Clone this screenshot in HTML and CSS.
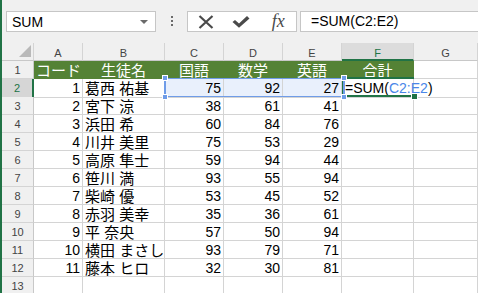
FILE: index.html
```html
<!DOCTYPE html>
<html lang="ja">
<head>
    <meta charset="UTF-8">
    <title>成績表 - SUM</title>
    <link rel="stylesheet" href="styles.css">
</head>
<body>

    <div class="app">
        <!-- Formula bar -->
        <div class="formula-bar">
            <div class="name-box">
                <span>SUM</span>
                <span class="caret"></span>
            </div>
            <div class="grip"><i></i><i></i><i></i></div>
            <div class="fx-buttons">
                <span class="btn">
                    <svg width="16" height="14" viewBox="0 0 16 14"><path d="M1.5 1 L14.5 13 M14.5 1 L1.5 13" stroke="#4a4a4a" stroke-width="2.2" fill="none"/></svg>
                </span>
                <span class="btn">
                    <svg width="18" height="12" viewBox="0 0 18 12"><path d="M0.5 6 L3 4 L7 7.5 L15 0 L17.5 2.5 L7 11.8 Z" fill="#4a4a4a"/></svg>
                </span>
                <span class="btn fx">fx</span>
            </div>
            <div class="formula-input">=SUM(C2:E2)</div>
        </div>

        <!-- Sheet -->
        <div class="sheet">
            <div class="row col-heads">
                <div class="corner"><span class="tri"></span></div>
                <div>A</div><div>B</div><div>C</div><div>D</div><div>E</div><div class="active">F</div><div>G</div>
            </div>
            <div class="row title-row">
                <div class="rh">1</div>
                <div>コード</div><div>生徒名</div><div>国語</div><div>数学</div><div>英語</div><div>合計</div><div class="plain"></div>
            </div>
            <div class="row">
                <div class="rh active">2</div>
                <div class="num">1</div><div class="name">葛西 祐基</div>
                <div class="num sel">75</div><div class="num sel">92</div><div class="num sel">27</div>
                <div class="editing">=SUM(<span class="ref">C2:E2</span>)</div><div></div>
            </div>
            <div class="row">
                <div class="rh">3</div>
                <div class="num">2</div><div class="name">宮下 涼</div>
                <div class="num">38</div><div class="num">61</div><div class="num">41</div><div></div><div></div>
            </div>
            <div class="row">
                <div class="rh">4</div>
                <div class="num">3</div><div class="name">浜田 希</div>
                <div class="num">60</div><div class="num">84</div><div class="num">76</div><div></div><div></div>
            </div>
            <div class="row">
                <div class="rh">5</div>
                <div class="num">4</div><div class="name">川井 美里</div>
                <div class="num">75</div><div class="num">53</div><div class="num">29</div><div></div><div></div>
            </div>
            <div class="row">
                <div class="rh">6</div>
                <div class="num">5</div><div class="name">高原 隼士</div>
                <div class="num">59</div><div class="num">94</div><div class="num">44</div><div></div><div></div>
            </div>
            <div class="row">
                <div class="rh">7</div>
                <div class="num">6</div><div class="name">笹川 満</div>
                <div class="num">93</div><div class="num">55</div><div class="num">94</div><div></div><div></div>
            </div>
            <div class="row">
                <div class="rh">8</div>
                <div class="num">7</div><div class="name">柴崎 優</div>
                <div class="num">53</div><div class="num">45</div><div class="num">52</div><div></div><div></div>
            </div>
            <div class="row">
                <div class="rh">9</div>
                <div class="num">8</div><div class="name">赤羽 美幸</div>
                <div class="num">35</div><div class="num">36</div><div class="num">61</div><div></div><div></div>
            </div>
            <div class="row">
                <div class="rh">10</div>
                <div class="num">9</div><div class="name">平 奈央</div>
                <div class="num">57</div><div class="num">50</div><div class="num">94</div><div></div><div></div>
            </div>
            <div class="row">
                <div class="rh">11</div>
                <div class="num">10</div><div class="name">横田 まさし</div>
                <div class="num">93</div><div class="num">79</div><div class="num">71</div><div></div><div></div>
            </div>
            <div class="row">
                <div class="rh">12</div>
                <div class="num">11</div><div class="name">藤本 ヒロ</div>
                <div class="num">32</div><div class="num">30</div><div class="num">81</div><div></div><div></div>
            </div>
            <div class="row">
                <div class="rh">13</div>
                <div></div><div></div><div></div><div></div><div></div><div></div><div></div>
            </div>

            <!-- selection overlays -->
            <div class="active-cell"><i class="fill-handle"></i></div>
            <div class="range">
                <i class="handle tl"></i><i class="handle bl"></i>
                <i class="handle tr"></i><i class="handle br"></i>
            </div>
        </div>
    </div>

</body>
</html>
```

FILE: styles.css
```css
* {
    margin: 0;
    padding: 0;
    box-sizing: border-box;
}

body {
    font-family: 'Liberation Sans', 'Noto Sans CJK JP', sans-serif;
    font-size: 14px;
    color: #000;
    background: #fff;
    width: 478px;
    height: 293px;
    overflow: hidden;
}

.app {
    height: 293px;
    border-left: 2px solid #217346;
    overflow: hidden;
}

/* Formula bar */
.formula-bar {
    display: flex;
    align-items: flex-start;
    height: 43px;
    padding: 11px 0 0 4px;
    background: #f0f0f0;
}

.name-box {
    display: flex;
    align-items: center;
    justify-content: space-between;
    width: 150px;
    height: 21px;
    padding: 0 7px 0 5px;
    background: #fff;
    border: 1px solid #c6c6c6;
    font-size: 14px;
}

.caret {
    width: 0;
    height: 0;
    border-left: 4px solid transparent;
    border-right: 4px solid transparent;
    border-top: 4px solid #6a6a6a;
}

.grip {
    display: flex;
    flex-direction: column;
    gap: 2px;
    margin: 5px 0 0 15px;
}

.grip i {
    display: block;
    width: 2px;
    height: 2px;
    background: #6a6a6a;
}

.fx-buttons {
    display: flex;
    width: 110px;
    height: 21px;
    margin-left: 14px;
    background: #fff;
    border: 1px solid #c6c6c6;
}

.btn {
    display: flex;
    align-items: center;
    justify-content: center;
    flex: 1;
}

.fx {
    font-family: 'Liberation Serif', serif;
    font-style: italic;
    font-size: 18px;
    color: #4a4a4a;
    padding: 0 0 1px 2px;
}

.formula-input {
    flex: 1;
    height: 21px;
    margin-left: 3px;
    padding-left: 10px;
    line-height: 19px;
    background: #fff;
    border: 1px solid #c6c6c6;
    border-right: none;
}

/* Sheet grid */
.sheet {
    position: relative;
}

.row {
    display: grid;
    grid-template-columns: 32px 49px 82px 59px 59px 59px 72px 1fr;
    height: 18px;
}

.row > div {
    border-right: 1px solid #d4d4d4;
    border-bottom: 1px solid #d4d4d4;
    padding: 1px 2px 0;
    line-height: 17px;
    white-space: nowrap;
    overflow: hidden;
}

.num {
    text-align: right;
}

.name {
    font-size: 15px;
}

.rh,
.col-heads > div {
    background: #f0f0f0;
    color: #444;
    font-size: 11px;
    text-align: center;
}

.rh {
    border-right-color: #c8c8c8 !important;
}

.col-heads > div {
    border-bottom-color: #c8c8c8;
    padding-top: 2px;
}

.col-heads .active {
    background: #dcdcdc;
    color: #217346;
    border-bottom: 2px solid #217346;
}

.rh.active {
    background: #d6d6d6;
    color: #217346;
    border-right: 2px solid #217346 !important;
}

.corner {
    display: flex;
    align-items: flex-end;
    justify-content: flex-end;
    padding: 0 2px 3px 0 !important;
}

.tri {
    width: 0;
    height: 0;
    border-left: 12px solid transparent;
    border-bottom: 12px solid #b9b9b9;
}

.title-row > div {
    background: #548235;
    border-color: #548235;
    color: #fff;
    font-size: 15px;
    text-align: center;
}

.title-row > .rh {
    background: #f0f0f0;
    color: #444;
    font-size: 11px;
    border-bottom-color: #d4d4d4;
}

.title-row > .plain {
    background: #fff;
    border-color: #d4d4d4;
}

.sel {
    background: #e9f0fc;
}

.editing {
    overflow: visible !important;
    padding-left: 3px !important;
}

.ref {
    color: #4a86e8;
}

/* Selection overlays */
.range {
    position: absolute;
    left: 162px;
    top: 35px;
    width: 181px;
    height: 19px;
    border: 1px solid #6f9ce8;
    border-left-width: 2px;
    border-right-width: 2px;
}

.handle {
    position: absolute;
    width: 6px;
    height: 6px;
    background: #6f9ce8;
    border: 1px solid #fff;
}

.handle.tl { left: -4px; top: -4px; }
.handle.bl { left: -4px; bottom: -4px; }
.handle.tr { right: -4px; top: -4px; }
.handle.br { right: -4px; bottom: -4px; }

.active-cell {
    position: absolute;
    left: 340px;
    top: 34px;
    width: 72px;
    height: 20px;
    border-top: 2px solid #217346;
    border-bottom: 2px solid #217346;
    border-left: 3px solid #217346;
}

.fill-handle {
    position: absolute;
    right: -4px;
    bottom: -5px;
    width: 7px;
    height: 7px;
    background: #217346;
    border: 1px solid #fff;
}
```
